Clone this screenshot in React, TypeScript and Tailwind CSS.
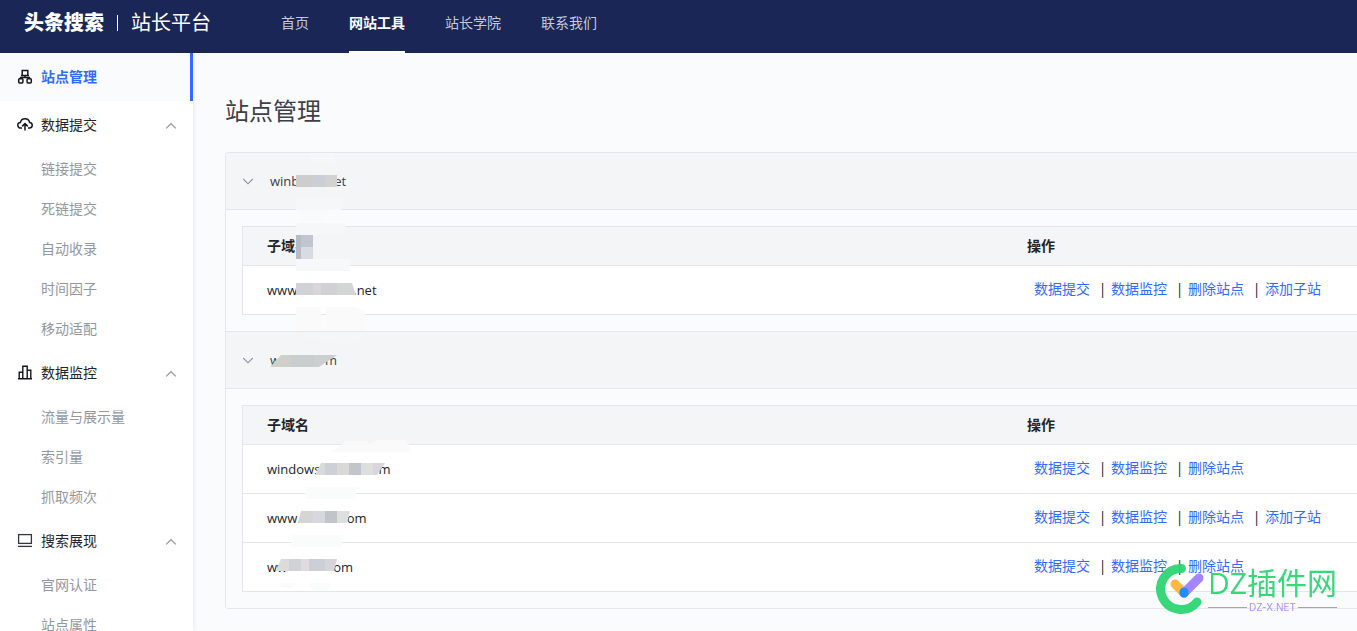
import React, { useState } from 'react';

interface MenuGroup {
    title: string;
    icon: React.ReactNode;
    items: string[];
}

interface Domain {
    start: string;
    end: string;
    gap: string;
    actions: string[];
}

interface Site {
    start: string;
    end: string;
    gap: string;
    domains: Domain[];
}

const NAV = ['首页', '网站工具', '站长学院', '联系我们'];

const ACTIONS = ['数据提交', '数据监控', '删除站点', '添加子站'];

const SITES: Site[] = [
    {
        start: 'winb',
        end: 'et',
        gap: 'w-[35px]',
        domains: [{ start: 'www', end: '.net', gap: 'w-[56px]', actions: ACTIONS }],
    },
    {
        start: 'w',
        end: 'm',
        gap: 'w-[45px]',
        domains: [
            { start: 'windows', end: 'm', gap: 'w-[58px]', actions: ACTIONS.slice(0, 3) },
            { start: 'www.', end: 'om', gap: 'w-[46px]', actions: ACTIONS },
            { start: 'ww', end: 'om', gap: 'w-[46px]', actions: ACTIONS.slice(0, 3) },
        ],
    },
];

const SitesIcon = () => (
    <svg width="16" height="16" viewBox="0 0 16 16" fill="none" stroke="#15171c" strokeWidth="1.5">
        <path d="M5.2 6.4V1.6h5.6v4.8M4 6.6h8M8 6.6v2M3.6 10V8.4h8.8V10" />
        <rect x="1.7" y="9.7" width="4.2" height="4.2" rx="0.8" />
        <rect x="10.1" y="9.7" width="4.2" height="4.2" rx="0.8" />
    </svg>
);

const CloudIcon = () => (
    <svg width="16" height="16" viewBox="0 0 16 16" fill="none" stroke="#15171c" strokeWidth="1.5">
        <path d="M5 11H3.8A2.8 2.8 0 0 1 3.4 5.4 4.7 4.7 0 0 1 12.6 5.4 2.8 2.8 0 0 1 12.2 11H11" />
        <path d="M8 13.5V6.9M5.2 9.4 8 6.6l2.8 2.8" />
    </svg>
);

const ChartIcon = () => (
    <svg width="16" height="16" viewBox="0 0 16 16" fill="none" stroke="#15171c" strokeWidth="1.4">
        <path d="M1 13.8h14M2.2 13.5V7.2h3.6M5.8 13.5V1.2h4.4v12.3M10.2 5.2h3.6v8.3" />
    </svg>
);

const ScreenIcon = () => (
    <svg width="16" height="16" viewBox="0 0 16 16" fill="none" stroke="#33363d" strokeWidth="1.3">
        <rect x="1.6" y="1.6" width="12.8" height="8.8" />
        <path d="M1 13.4h14" />
    </svg>
);

const GROUPS: MenuGroup[] = [
    { title: '数据提交', icon: <CloudIcon />, items: ['链接提交', '死链提交', '自动收录', '时间因子', '移动适配'] },
    { title: '数据监控', icon: <ChartIcon />, items: ['流量与展示量', '索引量', '抓取频次'] },
    { title: '搜索展现', icon: <ScreenIcon />, items: ['官网认证', '站点属性'] },
];

const Chevron = ({ up }: { up: boolean }) => (
    <svg width="12" height="12" viewBox="0 0 12 12" fill="none" stroke="#8d929c" strokeWidth="1.1">
        <path d={up ? 'M1.2 9.4 6 4.6l4.8 4.8' : 'M1.2 4 6 8.8 10.8 4'} />
    </svg>
);

const Header = () => (
    <header className="relative z-10 flex h-[53px] shrink-0 items-center bg-[#192656] pl-6 text-white">
        <a href="#" className="flex items-center pb-2">
            <span className="text-[20px] leading-6 font-black">头条搜索</span>
            <span className="mx-[13px] h-4 w-px bg-white" />
            <span className="text-[20px] leading-6">站长平台</span>
        </a>
        <nav className="ml-[70px] flex h-full gap-10">
            {NAV.map(label => (
                <a
                    key={label}
                    href="#"
                    className={
                        label === '网站工具'
                            ? 'flex items-center border-b-2 border-white pb-1.5 font-bold'
                            : 'flex items-center border-b-2 border-transparent pb-1.5 text-[#c6c9d5]'
                    }
                >
                    {label}
                </a>
            ))}
        </nav>
    </header>
);

const Sidebar = () => {
    const [closed, setClosed] = useState<string[]>([]);

    const toggle = (title: string) =>
        setClosed(prev => (prev.includes(title) ? prev.filter(t => t !== title) : [...prev, title]));

    return (
        <aside className="w-[193px] shrink-0 overflow-hidden bg-white shadow-[1px_0_4px_#e9ebf0]">
            <a href="#" className="flex h-12 items-center gap-2 border-r-3 border-[#326bff] bg-[#fafbfd] pl-[17px] font-bold text-[#326bff]">
                <SitesIcon />
                站点管理
            </a>
            {GROUPS.map(group => {
                const open = !closed.includes(group.title);
                return (
                    <div key={group.title}>
                        <button
                            onClick={() => toggle(group.title)}
                            className="flex h-12 w-full items-center gap-2 pr-4 pl-[17px] text-[#22252d]"
                        >
                            {group.icon}
                            <span className="flex-1 text-left">{group.title}</span>
                            <Chevron up={open} />
                        </button>
                        {open && group.items.map(item => (
                            <a key={item} href="#" className="flex h-10 items-center pl-[41px] text-[#93979f]">
                                {item}
                            </a>
                        ))}
                    </div>
                );
            })}
        </aside>
    );
};

const DomainName = ({ start, end, gap }: { start: string; end: string; gap: string }) => (
    <span className="flex items-center text-[13px]">
        {start}
        <span className={gap} />
        {end}
    </span>
);

const DomainTable = ({ domains }: { domains: Domain[] }) => (
    <table className="w-full table-fixed border-separate border-spacing-0 border-t border-l border-[#e5e6eb] bg-white">
        <thead>
            <tr className="h-[39px] bg-[#f4f5f7] text-left text-[#22252d]">
                <th className="w-[760px] border-b border-[#e5e6eb] pl-6 font-bold">子域名</th>
                <th className="border-b border-[#e5e6eb] pl-6 font-bold">操作</th>
            </tr>
        </thead>
        <tbody>
            {domains.map((domain, i) => (
                <tr key={i} className="h-[49px]">
                    <td className="border-b border-[#e5e6eb] pl-6">
                        <DomainName start={domain.start} end={domain.end} gap={domain.gap} />
                    </td>
                    <td className="border-b border-[#e5e6eb] pb-0.5 pl-[31px]">
                        <div className="flex">
                            {domain.actions.map((action, j) => (
                                <React.Fragment key={action}>
                                    {j > 0 && <span className="w-[21px] pl-1 text-center">|</span>}
                                    <button className="text-[#326bff]">{action}</button>
                                </React.Fragment>
                            ))}
                        </div>
                    </td>
                </tr>
            ))}
        </tbody>
    </table>
);

const SitePanel = ({ site }: { site: Site }) => {
    const [open, setOpen] = useState(true);

    return (
        <section className="border-b border-[#e5e6eb]">
            <button
                onClick={() => setOpen(prev => !prev)}
                className="flex h-14 w-full items-center gap-4 bg-[#f4f5f7] pl-4 text-[#3c4048]"
            >
                <Chevron up={!open} />
                <DomainName start={site.start} end={site.end} gap={site.gap} />
            </button>
            {open && (
                <div className="border-t border-[#e5e6eb] py-4 pl-4">
                    <DomainTable domains={site.domains} />
                </div>
            )}
        </section>
    );
};

/* Blurred patches drawn over the private parts of the domain names */
const Redactions = () => (
    <svg className="pointer-events-none absolute -top-px -left-px" width="200" height="456" viewBox="225 152 200 456">
        <path fill="#f6f7f8" d="M311 151h24v12h-24zM296 198h46v12h-46zM296 223h49v12h-49z" />
        <path fill="#f7f8f9" d="M296 259h54v12h-54z" />
        <path fill="#f9fafb" d="M301 210h21v13h-21z" />
        <path fill="#fafafb" d="M296 307h25v24h-25zM326 307h30l9 6v18h-39zM331 452l9-6 6-5h20l4 3 8-4h28q4 4 4 12z" />
        <path fill="#f5f6f7" d="M297 332h68l-7 10-18 2-12-4-15-2h-12z" />
        <path fill="#fafbfb" d="M306 487h51l-2 12h-50zM292 535h50v12h-51zM278 583h20l-7 5h-8zM309 583h22l-4 8h-14z" />

        <path fill="#cdcdcd" d="M296 175h17v12h-17z" />
        <path fill="#cbced6" d="M313 175h12v12h-12z" />
        <path fill="#d2d2cf" d="M325 175h12v12h-12z" />

        <path fill="#b7bbc2" d="M296 235h6v24h-6z" />
        <path fill="#c0c5cf" d="M301 235h12v12h-12z" />
        <path fill="#d8dce2" d="M301 247h12v12h-12z" />

        <path fill="#d1d2d5" d="M296 283h17v12h-17z" />
        <path fill="#dad5d9" d="M313 283h8v12h-8z" />
        <path fill="#d0d0d5" d="M321 283h16v12h-16z" />
        <path fill="#d4d5d5" d="M337 283h15l4 12h-19z" />

        <path fill="#cfd0ca" d="M281 355h9v12h-20z" />
        <path fill="#c8cdce" d="M290 355h24v12h-24z" />
        <path fill="#cccfcf" d="M314 355h23l-18 12h-5z" />

        <path fill="#dadada" d="M321 463h4v12h-10z" />
        <path fill="#cdd1d5" d="M325 463h12v12h-12z" />
        <path fill="#dad9d8" d="M337 463h12v12h-12z" />
        <path fill="#c3c5cd" d="M349 463h12v12h-12z" />
        <path fill="#dedede" d="M361 463h12v12h-12z" />
        <path fill="#d9d5da" d="M373 463h12l-8 12h-4z" />

        <path fill="#d5d5d5" d="M301 511h12v12h-15z" />
        <path fill="#d9d7de" d="M313 511h12v12h-12z" />
        <path fill="#c1c5c9" d="M325 511h12v12h-12z" />
        <path fill="#dedfdf" d="M337 511h13l-3 12h-10z" />

        <path fill="#dcdbdc" d="M281 559h8v12h-13z" />
        <path fill="#d1d2d5" d="M289 559h12v12h-12z" />
        <path fill="#dedbe1" d="M301 559h8v12h-8z" />
        <path fill="#cccfd3" d="M309 559h16v12h-16z" />
        <path fill="#d7d5da" d="M325 559h12l-3 12h-9z" />
    </svg>
);

const Watermark = () => (
    <div className="pointer-events-none fixed right-5 bottom-4 flex items-center gap-1 opacity-95">
        <svg width="48" height="52" viewBox="0 0 48 52" fill="none" strokeLinecap="round">
            <path d="M25.5 5.5A20.5 20.5 0 1 0 41 39" stroke="#2ed573" strokeWidth="9" />
            <path d="m19 21 9 9" stroke="#ffb638" strokeWidth="9" />
            <path d="M28 30 43 15" stroke="#a17fff" strokeWidth="9" />
            <path d="m28 29v1" stroke="#1688ff" strokeWidth="9" />
        </svg>
        <div>
            <div className="text-[30px] leading-9 whitespace-nowrap text-[#2ed573]">DZ插件网</div>
            <div className="flex items-center gap-0.5 font-[Inter,sans-serif] text-[10px] leading-3 text-[#a98cff]">
                <span className="h-px flex-1 bg-[#a98cff]" />
                DZ-X.NET
                <span className="h-px flex-1 bg-[#a98cff]" />
            </div>
        </div>
    </div>
);

const App: React.FC = () => (
    <div className="flex h-screen flex-col overflow-hidden bg-[#fafbfd] font-['Open_Sans','Noto_Sans_CJK_SC',sans-serif] text-sm text-[#22252d]">
        <Header />
        <div className="flex min-h-0 flex-1">
            <Sidebar />
            <main className="min-w-0 flex-1 overflow-hidden pt-10 pl-8">
                <h1 className="mb-6 text-2xl leading-[35px] text-[#3c4048]">站点管理</h1>
                <div className="relative overflow-hidden rounded-l border-t border-l border-[#e5e6eb]">
                    {SITES.map((site, i) => (
                        <SitePanel key={i} site={site} />
                    ))}
                    <Redactions />
                </div>
            </main>
        </div>
        <Watermark />
    </div>
);

export default App;
